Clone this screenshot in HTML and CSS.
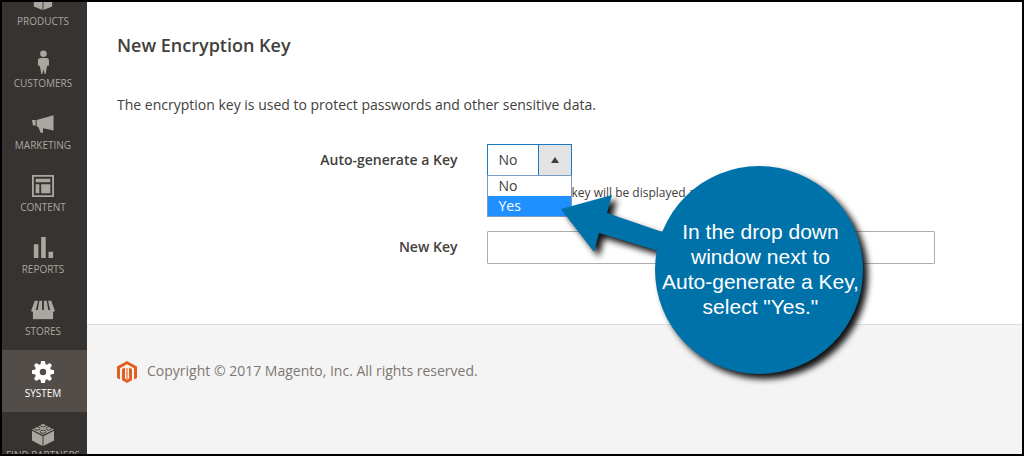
FILE: index.html
```html
<!DOCTYPE html>
<html lang="en">
<head>
    <meta charset="UTF-8">
    <meta name="viewport" content="width=device-width, initial-scale=1.0">
    <title>New Encryption Key</title>
    <link rel="stylesheet" href="styles.css">
</head>
<body>
    <nav class="sidebar">
        <ul class="menu">
            <li><a href="#" class="menu-item">
                <svg viewBox="0 0 24 24"><path d="M2 6l9.500 3v14L2 19zM22 6l-9.500 3v14l9.500-4zM12 1l8 3-8 3-8-3z"/></svg>
                <span>Products</span>
            </a></li>
            <li><a href="#" class="menu-item">
                <svg viewBox="0 0 24 24"><circle cx="12.500" cy="3" r="3.600"/><path d="M9 7.500h7q2.500 0 2.500 3V16h-2l-1.700 9h-1L12.500 20l-1.300 5h-1L8.500 16h-2v-5.500q0-3 2.500-3z"/></svg>
                <span>Customers</span>
            </a></li>
            <li><a href="#" class="menu-item">
                <svg viewBox="0 0 24 24"><path d="M0 7.500h4v6H1zM5 7.500l18.500-5v16.500l-11.500-2.500 0 5-2.500 0L7 15.500 5 14.500z"/></svg>
                <span>Marketing</span>
            </a></li>
            <li><a href="#" class="menu-item">
                <svg viewBox="0 0 24 24"><path fill-rule="evenodd" d="M0 0h24v24H0zM2 2v20h20V2zM4 4h16v4H4zM4 10h4v10H4zM10 10h10v10H10z"/></svg>
                <span>Content</span>
            </a></li>
            <li><a href="#" class="menu-item">
                <svg viewBox="0 0 24 24"><path d="M2 8h5v15H2zM10 0h5v23h-5zM18 16h5v7h-5z"/></svg>
                <span>Reports</span>
            </a></li>
            <li><a href="#" class="menu-item">
                <svg viewBox="0 0 24 24"><path d="M3 2h3.500L4 13q-2.500 2-5 0zM8 2h3v11q-2.500 2-5 0zM13 2h3l2 11q-2.500 2-5 0zM17.500 2H21l4 11q-2.500 2-5 0z"/><path d="M1 12h22v10H1z"/></svg>
                <span>Stores</span>
            </a></li>
            <li><a href="#" class="menu-item active">
                <svg viewBox="0 0 24 24"><path fill-rule="evenodd" d="M10 0h4l.8 3.500 1.400.6 3.200-1.900 2.400 2.400-1.900 3.200.6 1.400L24 10v4l-3.500.8-.6 1.400 1.900 3.200-2.400 2.400-3.200-1.900-1.400.6L14 24h-4l-.8-3.500-1.400-.6-3.200 1.900-2.400-2.400 1.900-3.200-.6-1.400L0 14v-4l3.500-.8.6-1.400-1.900-3.200 2.400-2.400 3.200 1.900 1.400-.6zM12 8.500a3.500 3.500 0 1 0 0 7 3.500 3.500 0 0 0 0-7z"/></svg>
                <span>System</span>
            </a></li>
            <li><a href="#" class="menu-item">
                <svg viewBox="0 0 24 24"><path d="M12 1l12 6-12 6L0 7zM0 8.500l11.500 6V25L0 19zM24 8.500l-11.500 6V25L24 19z"/><g class="studs"><ellipse cx="12" cy="2.500" rx="3" ry="1.800"/><ellipse cx="5.800" cy="6" rx="3" ry="1.800"/><ellipse cx="18.200" cy="6" rx="3" ry="1.800"/><ellipse cx="12" cy="9.500" rx="3" ry="1.800"/></g></svg>
                <span>Find Partners</span>
            </a></li>
        </ul>
    </nav>

    <div class="page">
        <main class="content">
            <h1>New Encryption Key</h1>
            <p class="intro">The encryption key is used to protect passwords and other sensitive data.</p>
            <form>
                <div class="field">
                    <label for="generate">Auto-generate a Key</label>
                    <div class="control">
                        <div class="select-box">
                            <select id="generate">
                                <option selected>No</option>
                                <option>Yes</option>
                            </select>
                            <ul class="options">
                                <li>No</li>
                                <li class="selected">Yes</li>
                            </ul>
                        </div>
                        <p class="note">key will be displayed a</p>
                        <div class="callout">
                            <svg viewBox="0 0 303 209">
                                <path d="M0 43L51 29 46 47 110 69 104 87 38 67 33 86z"/>
                                <circle cx="198" cy="104" r="104"/>
                            </svg>
                            <p>In the drop down<br>window next to<br>Auto-generate a Key,<br>select "Yes."</p>
                        </div>
                    </div>
                </div>
                <div class="field">
                    <label for="newKey">New Key</label>
                    <div class="control">
                        <input type="text" id="newKey">
                    </div>
                </div>
            </form>
        </main>
        <footer class="footer">
            <svg viewBox="0 0 20 22"><path d="M10 0l10 5.500v11.500l-3 1.500V7.200L10 3.300 3 7.200v11.300L0 17V5.500z"/><path d="M5 8l3-1.600v11.200l2 1.200 2-1.200V6.400L15 8v11.200L10 22l-5-2.800z"/><path class="logo-core" d="M9 7h2v11l-1 .6-1-.6z"/></svg>
            <span>Copyright © 2017 Magento, Inc. All rights reserved.</span>
        </footer>
    </div>
</body>
</html>
```
FILE: styles.css
```css
* {
    box-sizing: border-box;
}

body {
    margin: 0;
    height: 100vh;
    display: flex;
    overflow: hidden;
    border: 2px solid #000;
    background: #fff;
    color: #41403c;
    font-family: 'Open Sans', 'Noto Sans', sans-serif;
    font-size: 14px;
    line-height: 20px;
}

h1, p, ul {
    margin: 0;
    padding: 0;
}

/* Sidebar */
.sidebar {
    flex: none;
    width: 85px;
    overflow: hidden;
    background: #373330;
}

.menu {
    list-style: none;
    margin-top: -24px; /* scrolled part of the menu */
}

.menu-item {
    display: flex;
    flex-direction: column;
    align-items: center;
    gap: 2px;
    height: 62px;
    padding: 11px 3px 0 0;
    color: #aaa6a0;
    font-size: 10px;
    line-height: 16px;
    text-transform: uppercase;
    text-decoration: none;
    white-space: nowrap;
}

.menu-item svg {
    flex: none;
    width: 22px;
    height: 22px;
    fill: currentColor;
    overflow: visible;
}

.menu-item.active {
    background: #524d49;
    color: #fff;
}

.studs {
    stroke: #373330;
    stroke-width: 1px;
}

/* Page */
.page {
    flex: 1;
    min-width: 0;
    display: flex;
    flex-direction: column;
}

.content {
    padding: 31px 9px 60px 30px;
}

h1 {
    margin-bottom: 38px;
    font-size: 18px;
    line-height: 24px;
    font-weight: 600;
}

.intro {
    margin-bottom: 29px;
}

.field {
    display: grid;
    grid-template-columns: 38% 50%;
    column-gap: 30px;
    margin-bottom: 29px;
}

.field:last-child {
    margin-bottom: 0;
}

.field label {
    font-weight: 600;
    line-height: 32px;
    text-align: right;
}

.control {
    position: relative;
}

.select-box {
    position: relative;
    width: 85px;
}

.select-box::after {
    content: "";
    position: absolute;
    top: 13px;
    right: 13px;
    border: 4px solid transparent;
    border-top: 0;
    border-bottom: 6px solid #41403c;
}

select {
    display: block;
    width: 100%;
    height: 32px;
    padding: 0 10px;
    appearance: none;
    border: 1px solid #1979c3;
    border-radius: 0;
    background: linear-gradient(to left, #e3e3e3 32px, #1979c3 32px, #1979c3 33px, #fff 33px);
    color: #41403c;
    font: inherit;
}

.options {
    position: absolute;
    z-index: 1;
    top: 31px;
    left: 0;
    width: 100%;
    list-style: none;
    border: 1px solid #7a9bc4;
    background: #fff;
}

.options li {
    padding: 0 10px;
}

.options .selected {
    background: #1e90ff;
    color: #fff;
}

.note {
    margin-top: 8px;
    padding-left: 84px; /* clears the open list */
    font-size: 12px;
    line-height: 18px;
}

input[type="text"] {
    display: block;
    width: 100%;
    height: 33px;
    padding: 0 10px;
    border: 1px solid #adadad;
    border-radius: 1px;
    font: inherit;
}

/* Callout */
.callout {
    position: absolute;
    z-index: 2;
    top: 22px;
    left: 74px;
    width: 303px;
    height: 209px;
    padding-bottom: 4px;
    display: flex;
    align-items: center;
    justify-content: flex-end;
}

.callout svg {
    position: absolute;
    inset: 0;
    fill: #0072aa;
    overflow: visible;
    filter: drop-shadow(5px 5px 3px #111);
}

.callout p {
    position: relative;
    width: 208px;
    color: #fff;
    font-family: 'Liberation Sans', Arial, sans-serif;
    font-size: 21px;
    line-height: 25px;
    text-align: center;
    white-space: nowrap;
}

/* Footer */
.footer {
    flex: 1;
    display: flex;
    align-items: flex-start;
    gap: 10px;
    padding: 36px 30px;
    border-top: 1px solid #dcdcdc;
    background: #f4f4f4;
    color: #7d7873;
}

.footer svg {
    width: 20px;
    height: 22px;
    fill: #e2601f;
}

.footer .logo-core {
    fill: #f0a37c;
}
```
